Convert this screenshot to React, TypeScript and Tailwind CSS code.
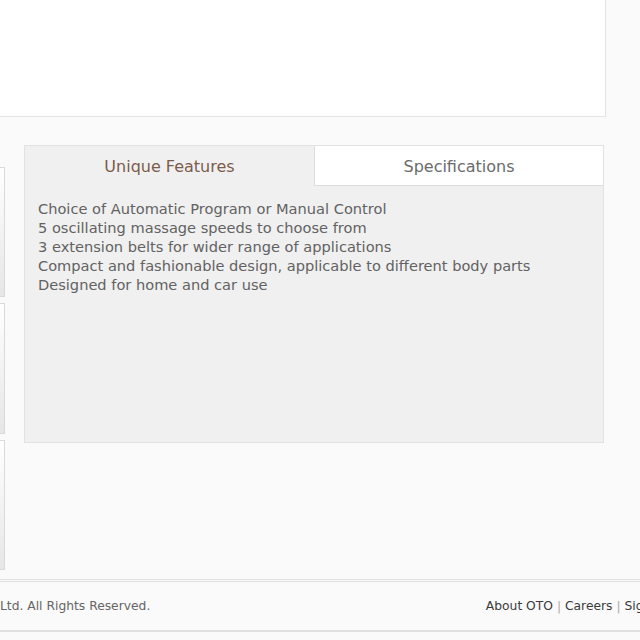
export default function App() {
  const features = [
    "Choice of Automatic Program or Manual Control",
    "5 oscillating massage speeds to choose from",
    "3 extension belts for wider range of applications",
    "Compact and fashionable design, applicable to different body parts",
    "Designed for home and car use",
  ];

  return (
    <div className="relative h-[640px] w-[640px] overflow-hidden bg-[#fafafa] font-['DejaVu_Sans',sans-serif]">
      {/* product image panel, top */}
      <div className="h-[117px] w-[606px] border-r border-b border-[#e4e4e4] bg-white" />

      <div className="mt-[28px] flex">
        {/* thumbnail strip, cut off at left */}
        <div className="flex w-[5px] flex-col gap-[6px] pt-[22px]">
          <div className="h-[130px] border border-l-0 border-[#dadada] bg-gradient-to-b from-white to-[#e6e6e6]" />
          <div className="h-[131px] border border-l-0 border-[#dadada] bg-gradient-to-b from-white to-[#e6e6e6]" />
          <div className="h-[130px] border border-l-0 border-[#dadada] bg-gradient-to-b from-white to-[#e6e6e6]" />
        </div>

        {/* tabs */}
        <div className="ml-[19px] flex h-[298px] w-[580px] flex-col border border-[#e2e2e2] bg-[#f0f0f0]">
          <div className="flex h-[40px]">
            <div className="flex w-[289px] items-center justify-center pt-[2px] text-[16px] text-[#7b5c4c]">Unique Features</div>
            <div className="flex flex-1 items-center justify-center border-b border-l border-[#dcdcdc] bg-white pt-[2px] text-[16px] text-[#6b6b6b]">Specifications</div>
          </div>
          <ul className="px-[13px] pt-[13px] text-[14.6px] leading-[19px] text-[#626262]">
            {features.map((f) => (
              <li key={f}>{f}</li>
            ))}
          </ul>
        </div>
      </div>

      {/* footer */}
      <div className="mt-[9px] border-t-[3px] border-double border-[#dedede]">
        <div className="flex h-[48px] items-center justify-between text-[12.3px] text-[#666]">
          <span className="whitespace-nowrap">Ltd. All Rights Reserved.</span>
          <span className="-mr-[32px] whitespace-nowrap text-[#3a3a3a]">
            About OTO <span className="text-[#aaa]">|</span> Careers <span className="text-[#aaa]">|</span> Sign Up
          </span>
        </div>
        <div className="border-t-2 border-[#e0e0e0]" />
      </div>
    </div>
  );
}
